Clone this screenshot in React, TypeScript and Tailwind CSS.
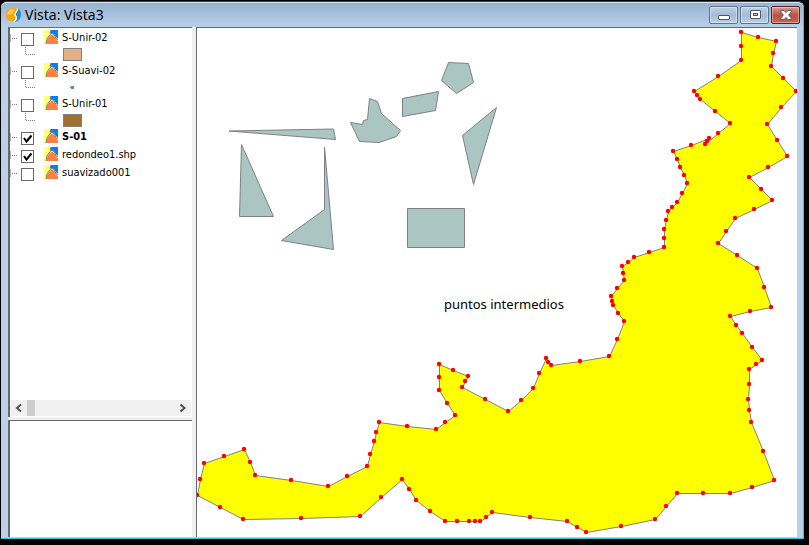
import { useState } from 'react'

type Point = [number, number];

interface Layer {
    name: string;
    checked: boolean;
    active?: boolean;
    symbol?: string;
}

const initialLayers: Layer[] = [
    { name: "S-Unir-02", checked: false, symbol: "fill-[#e6b087]" },
    { name: "S-Suavi-02", checked: false, symbol: "point" },
    { name: "S-Unir-01", checked: false, symbol: "fill-[#a0702f]" },
    { name: "S-01", checked: true, active: true },
    { name: "redondeo1.shp", checked: true },
    { name: "suavizado001", checked: false },
];

// vertices and midpoints of the S-01 polygon
const outline: Point[] = [
    [741, 32], [758, 37], [776, 41], [773, 53], [771, 66], [783, 78], [796, 91], [781, 107], [767, 124], [777, 140],
    [787, 156], [768, 167], [749, 177], [761, 189], [772, 200], [754, 209], [735, 218], [726, 231], [718, 243], [737, 255],
    [757, 268], [764, 287], [771, 307], [750, 311], [730, 316], [736, 325], [742, 333], [752, 347], [762, 360], [756, 364],
    [749, 369], [749, 384], [748, 399], [749, 410], [751, 422], [763, 451], [774, 480], [752, 487], [730, 493], [703, 493],
    [677, 493], [666, 506], [655, 519], [621, 526], [586, 532], [577, 527], [567, 521], [530, 517], [492, 512], [486, 517],
    [480, 521], [475, 521], [469, 521], [457, 521], [445, 521], [430, 511], [416, 500], [409, 489], [402, 479], [381, 497],
    [360, 516], [301, 518], [243, 519], [220, 507], [197, 495], [200, 479], [204, 463], [224, 456], [244, 449], [250, 462],
    [255, 475], [291, 480], [328, 486], [347, 476], [367, 466], [370, 454], [374, 441], [376, 432], [379, 422], [407, 426],
    [436, 429], [445, 422], [455, 415], [447, 403], [439, 390], [439, 377], [439, 364], [453, 370], [468, 376], [465, 381],
    [462, 387], [485, 399], [508, 411], [521, 400], [533, 388], [539, 373], [546, 358], [548, 362], [551, 365], [580, 361],
    [609, 356], [617, 339], [624, 321], [618, 313], [613, 305], [612, 301], [611, 296], [617, 288], [624, 280], [623, 273],
    [622, 266], [628, 262], [634, 257], [649, 252], [664, 247], [664, 238], [664, 229], [666, 220], [668, 211], [672, 207],
    [677, 202], [682, 193], [687, 183], [684, 175], [680, 167], [677, 159], [673, 151], [691, 145], [709, 138], [707, 141],
    [705, 144], [718, 133], [730, 123], [715, 111], [700, 99], [697, 95], [694, 91], [718, 76], [741, 60], [741, 46],
];

const shapes = [
    "229,131 333.5,129 335.5,139.5",
    "241.5,144.5 239.5,216.5 273.5,216.5",
    "324.5,147 324.5,209.5 281.5,240.5 333.5,249.5",
    "369.5,98.5 377.5,101.5 381.5,113.5 400.5,130.5 396.5,136.5 379,142.5 359.5,141.5 350.5,122.5 362.5,124.5 363.5,120.5 367.5,119.5",
    "402.5,98.5 438.5,91.5 435.5,110.5 402.5,116.5",
    "448.5,62.5 468.5,63.5 473.5,82.5 456.5,93.5 441.5,80.5",
    "496.5,107.5 462.5,135.5 473.5,184.5",
    "407.5,208.5 464.5,208.5 464.5,247.5 407.5,247.5",
];

function AppIcon() {
    return (
        <svg className="h-4 w-4 shrink-0" viewBox="0 0 16 16">
            <path d="M8 1C3.500 1 0 3.500 0 8s3 6.500 7 6.500c2 0 3-1.500 3.500-3 .5-1.600-1-2-1-3.500S11.500 4 11.500 2.500C10.500 1.500 9.500 1 8 1z" fill="#f4a812" />
            <path d="M7 2C3.500 2 1.500 4 1.200 7.500c2.500 1 5.500-.5 7-4z" fill="#ffc94a" />
            <path d="M12 1.500c1.500.5 3 3 3 6 0 4-2.500 7-6.500 7.500 2-1.500 2.800-3 2.500-4.500-.3-1.300-1.600-2-1.300-3.500C10 5.500 12.300 4 12 1.500z" fill="#2390d4" />
            <path d="M11.300 1.500C12 4 9.300 5.300 9 7c-.3 1.500 1.400 2.300 1.400 3.700 0 1.600-1 3-2.600 4" fill="none" stroke="#fff" strokeWidth="1.200" />
        </svg>
    );
}

function LayerIcon() {
    return (
        <svg className="h-[14px] w-[14px]" viewBox="0 0 14 14">
            <path d="M0 0h14v14H0z" fill="#ffff80" />
            <path d="M7 0h7v9l-2-2-2-3-4-1z" fill="#0080ff" />
            <path d="M2 14l1-4 2-3 2-2h2l2 2 1 3 2 1v3z" fill="#ff8040" />
            <path d="M7 0L6 3l3 1 2 2 1 3 2 1M7 4L5 6 3 9l-1 5" fill="none" stroke="#808080" />
        </svg>
    );
}

function LayerSymbol({ symbol }: { symbol: string }) {
    return (
        <svg className="block h-[15px] w-[75px]" viewBox="0 0 75 15">
            <path d="M15.500 1v8M16 8.500h9" stroke="#808080" strokeDasharray="1 1" fill="none" />
            {symbol === "point"
                ? <path d="M60 8h1v-1h3v3h-3v-1h-1z" fill="#4ea072" />
                : <rect className={symbol} x="53.500" y="2.500" width="18" height="12" stroke="#808080" />}
        </svg>
    );
}

function TitleButton({ label, close, onClick, children }: { label: string, close?: boolean, onClick?: () => void, children: React.ReactNode }) {
    const look = close
        ? "border-[#54202a] bg-linear-to-b from-[#dc9c92] via-[#c0503f] to-[#c8644f]"
        : "border-[#5e7590] bg-linear-to-b from-[#bdd0e4] via-[#a3bcd7] to-[#b9d0e8]";

    return (
        <button type="button" aria-label={label} onClick={onClick}
            className={"flex h-[18px] w-[29px] items-center justify-center rounded-xs border inset-ring inset-ring-white/40 " + look}>
            {children}
        </button>
    );
}

export default function App() {
    const [layers, setLayers] = useState(initialLayers);

    function toggleLayer(name: string) {
        setLayers(layers.map((l) => l.name === name ? { ...l, checked: !l.checked } : l));
    }

    return (
        <div className="min-h-screen bg-black pt-px pr-[5px] pb-[5px] pl-px">
            <div className="rounded-t-md border-t border-r border-b border-[#35c0e0] border-t-[#3a3a48] bg-[#b9d1ea]">
                <header className="flex h-[25px] items-center justify-between rounded-t-md border-t border-[#dbe7f4] bg-linear-to-b from-[#98b3d0] to-[#b9d0e9] pr-[3px] pl-[5px]">
                    <div className="flex items-center gap-[3px]">
                        <AppIcon />
                        <h1 className="font-['Noto_Sans'] text-sm leading-5 text-black">Vista: Vista3</h1>
                    </div>
                    <div className="flex gap-[2px]">
                        <TitleButton label="Minimizar">
                            <svg className="h-3 w-3" viewBox="0 0 12 12"><rect x=".5" y="6.500" width="11" height="4" rx=".5" fill="#fff" stroke="#535666" /></svg>
                        </TitleButton>
                        <TitleButton label="Maximizar">
                            <svg className="h-3 w-3" viewBox="0 0 12 12">
                                <rect x="1.500" y="1.500" width="10" height="8" rx=".5" fill="#fff" stroke="#535666" />
                                <rect x="4.500" y="4.500" width="4" height="2" fill="#a3bcd7" stroke="#535666" />
                            </svg>
                        </TitleButton>
                        <TitleButton label="Cerrar" close>
                            <svg className="h-3 w-3" viewBox="0 0 12 12">
                                <path d="M.5 1.500h3.500l2 2 2-2h3.500v1L8.700 6l2.800 3.500v1H8l-2-2-2 2H.5v-1L3.300 6 .5 2.500z" fill="#fff" stroke="#535666" />
                            </svg>
                        </TitleButton>
                    </div>
                </header>

                <main className="mr-[6px] mb-px ml-[7px] flex bg-[#f0f0f0]">
                    <aside className="flex w-[184px] shrink-0 flex-col gap-[3px]">
                        <div className="flex flex-1 flex-col border-t border-l-2 border-[#696969] bg-white">
                            <ul className="flex-1 font-['DejaVu_Sans_Condensed','DejaVu_Sans',sans-serif] text-[11px] text-black">
                                {layers.map((layer) => (
                                    <li key={layer.name}>
                                        <div className="flex h-[18px] items-start">
                                            <svg className="h-[18px] w-[11px]" viewBox="0 0 11 18">
                                                <path d="M.5 6v8" stroke="#b0b0b0" />
                                                <path d="M2 10.500h5" stroke="#808080" strokeDasharray="1 1" />
                                            </svg>
                                            <label className="flex h-[18px] items-start">
                                                <input type="checkbox" checked={layer.checked} onChange={() => toggleLayer(layer.name)} className="peer sr-only" />
                                                <svg className="mt-[5px] h-[13px] w-[13px] peer-checked:[&_path]:visible" viewBox="0 0 13 13">
                                                    <rect x=".5" y=".5" width="12" height="12" fill="#fff" stroke="#696969" />
                                                    <path className="invisible" d="M3 6l2.500 3.500L10.500 3.500" fill="none" stroke="#000" strokeWidth="2" />
                                                </svg>
                                                <span className="mt-[2px] mr-1 ml-[10px]"><LayerIcon /></span>
                                                <span className={layer.active ? "leading-5 font-bold" : "leading-5"}>{layer.name}</span>
                                            </label>
                                        </div>
                                        {layer.symbol && <LayerSymbol symbol={layer.symbol} />}
                                    </li>
                                ))}
                            </ul>
                            <div className="mr-px mb-px flex h-4 items-stretch bg-[#f0f0f0]">
                                <button type="button" aria-label="Izquierda" className="flex w-[17px] items-center justify-center">
                                    <svg className="h-2 w-2" viewBox="0 0 8 8"><path d="M6 .5L2 4l4 3.500" fill="none" stroke="#505050" strokeWidth="2" /></svg>
                                </button>
                                <div className="w-2 bg-[#cdcdcd]"></div>
                                <div className="flex-1"></div>
                                <button type="button" aria-label="Derecha" className="flex w-[17px] items-center justify-center">
                                    <svg className="h-2 w-2" viewBox="0 0 8 8"><path d="M1.500.5l4 3.500-4 3.500" fill="none" stroke="#505050" strokeWidth="2" /></svg>
                                </button>
                            </div>
                        </div>
                        <div className="h-[117px] border-t border-l-2 border-[#696969] bg-white"></div>
                    </aside>

                    <section className="ml-1 min-w-0 flex-1 border-t border-l border-[#696969] bg-white">
                        <svg className="block h-auto w-full" viewBox="197 28 600 509">
                            <g fill="#abc6c2" stroke="#808080">
                                {shapes.map((points) => <polygon key={points} points={points} />)}
                            </g>
                            <polygon points={outline.map((p) => p.join(",")).join(" ")} transform="translate(.5 .5)" fill="#ffff00" stroke="#808080" />
                            <g fill="#ff0000">
                                {outline.map(([x, y], i) => <circle key={i} cx={x} cy={y} r="2.200" />)}
                            </g>
                            <text x="444" y="309" className="fill-black font-['Noto_Sans'] text-[13px]">puntos intermedios</text>
                        </svg>
                    </section>
                </main>
            </div>
        </div>
    );
}
